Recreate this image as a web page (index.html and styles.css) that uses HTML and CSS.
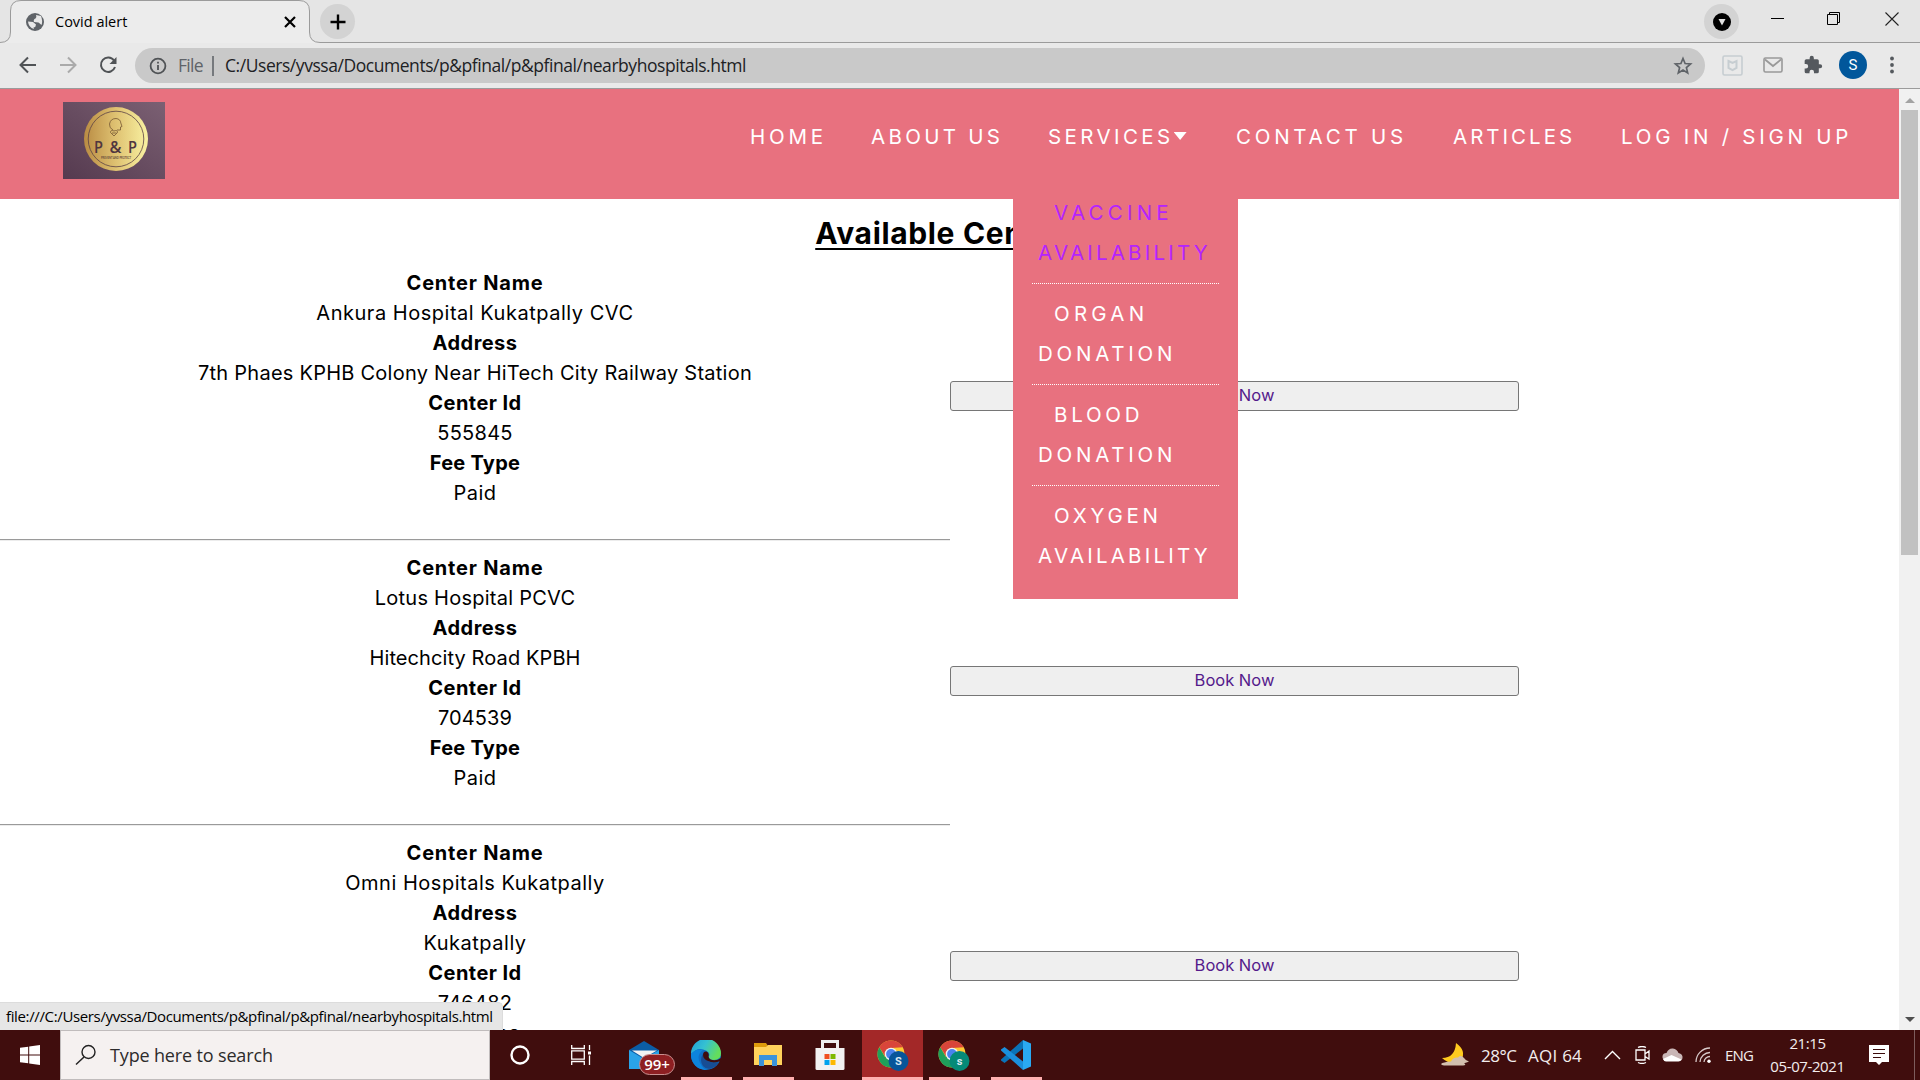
FILE: index.html
```html
<!DOCTYPE html>
<html lang="en">
<head>
<meta charset="utf-8">
<title>Covid alert</title>
<link rel="stylesheet" href="styles.css">
</head>
<body>
<header class="browser">
  <div class="tabstrip">
    <svg class="tab-shape" width="1920" height="43" viewBox="0 0 1920 43">
      <path class="tab-fill" d="M0 43V42.5Q10.5 42.500 10.500 32V11Q10.500 .500 21 .500H299Q309.500 .500 309.500 11V32Q309.500 42.500 320 42.500V43Z"/>
      <path class="tab-line" d="M0 42.500Q10.500 42.500 10.500 32V11Q10.500 .500 21 .500H299Q309.500 .500 309.500 11V32Q309.500 42.500 320 42.500H1920"/>
    </svg>
    <div class="tab">
      <svg width="18" height="18" viewBox="0 0 18 18"><circle cx="9" cy="9" r="9" fill="#5f6368"/><path d="M10 2L15 3Q17 8 15.500 12L12.500 9.500L8 9Q7 6.500 9.500 5.500Q11 4 10 2ZM2 8.500L7 9L10 11.500Q10 14 7.500 14.500L8 16Q2.500 14.500 2 8.500Z" fill="#e8e8e8"/></svg>
      <span class="tab-title">Covid alert</span>
      <svg width="12" height="12" viewBox="0 0 12 12"><path d="M1 1L11 11M11 1L1 11" stroke="#000" stroke-width="2.200"/></svg>
    </div>
    <div class="round newtab"><svg width="16" height="16" viewBox="0 0 16 16"><path d="M8 .500V15.500M.500 8H15.500" stroke="#000" stroke-width="2.400"/></svg></div>
    <div class="window-buttons">
      <div class="round"><svg width="18" height="18" viewBox="0 0 18 18"><circle cx="9" cy="9" r="9"/><path d="M5.500 6H12.500L9 12.500Z" fill="#e0e0e0"/></svg></div>
      <svg width="13" height="13" viewBox="0 0 13 13"><path d="M0 6.500H13" stroke="#000"/></svg>
      <svg width="14" height="14" viewBox="0 0 14 14"><path d="M.500 2.500H10.500V12.500H.500ZM2.500 2V.500H12.500V10.500H11" fill="none" stroke="#000"/></svg>
      <svg width="14" height="14" viewBox="0 0 14 14"><path d="M.500 .500L13.500 13.500M13.500 .500L.500 13.500" stroke="#222" stroke-width="1.100"/></svg>
    </div>
  </div>
  <div class="toolbar">
    <svg class="nav-icon" width="18" height="18" viewBox="0 0 18 18"><path d="M17 9H2M9 1.500L1.500 9L9 16.500" fill="none" stroke="#505356" stroke-width="2"/></svg>
    <svg class="nav-icon" width="18" height="18" viewBox="0 0 18 18"><path d="M1 9H16M9 1.500L16.500 9L9 16.500" fill="none" stroke="#aaa" stroke-width="2"/></svg>
    <svg class="nav-icon" width="18" height="18" viewBox="0 0 18 18"><path d="M15 4.500A7.200 7.200 0 1 0 16 11" fill="none" stroke="#505356" stroke-width="2"/><path d="M17.500 1V8H10.500Z" fill="#505356"/></svg>
    <div class="omnibox">
      <svg width="18" height="18" viewBox="0 0 18 18"><circle cx="9" cy="9" r="7.400" fill="none" stroke="#505356" stroke-width="1.800"/><path d="M9 8V13M9 4.800V6.600" stroke="#505356" stroke-width="1.800"/></svg>
      <span class="scheme">File</span><i class="divider"></i>
      <span class="url">C:/Users/yvssa/Documents/p&amp;pfinal/p&amp;pfinal/nearbyhospitals.html</span>
      <svg class="star" width="20" height="20" viewBox="0 0 20 20"><path d="M10 2.500L12.100 7.500L17.600 8L13.400 11.600L14.700 17L10 14.100L5.300 17L6.600 11.600L2.400 8L7.900 7.500Z" fill="none" stroke="#5f6368" stroke-width="1.700"/></svg>
    </div>
    <div class="extensions">
      <svg width="21" height="21" viewBox="0 0 21 21"><rect x="1" y="1" width="19" height="19" rx="1.500" fill="none" stroke="#c6cdd1" stroke-width="1.600"/><path d="M6.500 6L10.500 8L14.500 6V13L10.500 15.200L6.500 13Z" fill="none" stroke="#c6cdd1" stroke-width="2"/></svg>
      <svg width="20" height="16" viewBox="0 0 20 16"><rect x="1" y="1" width="18" height="14" rx="1.500" fill="none" stroke="#999" stroke-width="1.600"/><path d="M2 2.500L10 9L18 2.500" fill="none" stroke="#999" stroke-width="1.800"/></svg>
      <svg width="20" height="20" viewBox="0 0 24 24"><path fill="#55595e" d="M20.500 11H19V7a2 2 0 0 0-2-2h-4V3.500a2.500 2.500 0 0 0-5 0V5H4a2 2 0 0 0-2 2v3.800h1.500a2.700 2.700 0 0 1 0 5.400H2V20a2 2 0 0 0 2 2h3.800v-1.500a2.700 2.700 0 0 1 5.400 0V22H17a2 2 0 0 0 2-2v-4h1.500a2.500 2.500 0 0 0 0-5z"/></svg>
      <span class="avatar">S</span>
      <svg class="dots" width="4" height="18" viewBox="0 0 4 18"><circle cx="2" cy="2.500" r="1.900" fill="#55595e"/><circle cx="2" cy="9" r="1.900" fill="#55595e"/><circle cx="2" cy="15.500" r="1.900" fill="#55595e"/></svg>
    </div>
  </div>
</header>

<div class="viewport">
  <div class="page">
    <nav class="site-nav">
      <svg class="logo" width="102" height="77" viewBox="0 0 102 77">
        <defs>
          <linearGradient id="bg" x1="0" y1="1" x2="1" y2="0"><stop offset="0" stop-color="#553a4f"/><stop offset="1" stop-color="#7b6073"/></linearGradient>
          <linearGradient id="gold" x1="0" x2="1"><stop offset="0" stop-color="#b98b43"/><stop offset=".5" stop-color="#dfc272"/><stop offset="1" stop-color="#f9f2a2"/></linearGradient>
        </defs>
        <rect width="102" height="77" fill="url(#bg)"/>
        <circle cx="53" cy="37" r="32" fill="url(#gold)"/>
        <circle cx="53" cy="37" r="27.800" fill="none" stroke="#5b4145" stroke-width=".8"/>
        <path d="M50 28Q46 26 46.500 22Q47.500 16.500 53 16.500Q57.500 17 57.800 21L59 24.500L57.500 25V28H54M51 34L47.500 30.500Q47.500 27.500 51 29Q54.500 27.500 54.500 30.500ZM49 31H53.500" fill="none" stroke="#755733" stroke-width=".8"/>
        <g class="logo-name"><text x="31" y="50.500" textLength="9" lengthAdjust="spacingAndGlyphs">P</text><text x="46.500" y="50.500" textLength="12" lengthAdjust="spacingAndGlyphs">&amp;</text><text x="65" y="50.500" textLength="9" lengthAdjust="spacingAndGlyphs">P</text></g>
        <text class="logo-tag" x="38" y="56.500" textLength="30" lengthAdjust="spacingAndGlyphs">PREVENT AND PROTECT</text>
      </svg>
      <ul class="menu">
        <li class="m-home"><a>HOME</a></li>
        <li class="m-about"><a>ABOUT US</a></li>
        <li class="m-services"><a>SERVICES</a><i class="caret"></i>
          <ul class="dropdown">
            <li class="active"><a><b class="first roomy">VACCINE</b><br><b class="tight">AVAILABILITY</b></a></li>
            <li><a><b class="first roomy">ORGAN</b><br><b>DONATION</b></a></li>
            <li><a><b class="first">BLOOD</b><br><b>DONATION</b></a></li>
            <li><a><b class="first">OXYGEN</b><br><b class="tight">AVAILABILITY</b></a></li>
          </ul>
        </li>
        <li class="m-contact"><a>CONTACT US</a></li>
        <li class="m-articles"><a>ARTICLES</a></li>
        <li class="m-login"><a>LOG IN / SIGN UP</a></li>
      </ul>
    </nav>
    <h2 class="title">Available Centers</h2>
    <section class="center">
      <div class="details">
        <strong class="name">Center Name</strong><p class="wide">Ankura Hospital Kukatpally CVC</p>
        <strong>Address</strong><p>7th Phaes KPHB Colony Near HiTech City Railway Station</p>
        <strong>Center Id</strong><p>555845</p>
        <strong class="fee">Fee Type</strong><p class="wide">Paid</p>
      </div>
      <button class="book">Book Now</button>
    </section>
    <section class="center">
      <div class="details">
        <strong class="name">Center Name</strong><p>Lotus Hospital PCVC</p>
        <strong>Address</strong><p class="narrow">Hitechcity Road KPBH</p>
        <strong>Center Id</strong><p class="narrow">704539</p>
        <strong class="fee">Fee Type</strong><p class="wide">Paid</p>
      </div>
      <button class="book">Book Now</button>
    </section>
    <section class="center">
      <div class="details">
        <strong class="name">Center Name</strong><p class="wide">Omni Hospitals Kukatpally</p>
        <strong>Address</strong><p class="wide">Kukatpally</p>
        <strong>Center Id</strong><p>746482</p>
        <strong class="fee">Fee Type</strong><p class="wide">Paid</p>
      </div>
      <button class="book">Book Now</button>
    </section>
  </div>
  <div class="scrollbar">
    <svg width="10" height="5" viewBox="0 0 10 5"><path d="M0 5L5 0L10 5Z" fill="#a3a3a3"/></svg>
    <div class="thumb"></div>
    <svg width="10" height="5" viewBox="0 0 10 5"><path d="M0 0L5 5L10 0Z" fill="#505050"/></svg>
  </div>
  <div class="status">file:///C:/Users/yvssa/Documents/p&amp;pfinal/p&amp;pfinal/nearbyhospitals.html</div>
</div>

<footer class="taskbar">
  <div class="start"><svg width="20" height="20" viewBox="0 0 20 20"><path fill="#fff" d="M0 2.800L8.200 1.700V9.500H0ZM9.200 1.500L20 0V9.500H9.200ZM0 10.500H8.200V18.300L0 17.200ZM9.200 10.500H20V20L9.200 18.500Z"/></svg></div>
  <div class="search">
    <svg width="22" height="22" viewBox="0 0 22 22"><circle cx="13.500" cy="8" r="6.500" fill="none" stroke="#222" stroke-width="1.400"/><path d="M9 13L1 20.500" stroke="#222" stroke-width="1.500"/></svg>
    <span>Type here to search</span>
  </div>
  <div class="apps">
    <div class="app"><svg width="20" height="20" viewBox="0 0 20 20"><circle cx="10" cy="10" r="8.500" fill="none" stroke="#fff" stroke-width="2.400"/></svg></div>
    <div class="app taskview"><svg width="20" height="20" viewBox="0 0 20 20"><path d="M.700 0V3.500H13.300V0M.700 20V16.500H13.300V20M.700 5.800H13.300V14.200H.700ZM18.500 0V5M18.500 10.500V20" fill="none" stroke="#fff" stroke-width="1.300"/><path d="M17 6.500h3v3h-3z" fill="#fff"/></svg></div>
    <div class="app mail"><svg width="30" height="28" viewBox="0 0 30 28"><path d="M0 9L15 0L30 9V20H0Z" fill="#0b5da6"/><path d="M0 9L15 18L30 9V28H0Z" fill="#2aa3e8"/><path d="M3 9.500H28L15 17Z" fill="#f2f2f2"/></svg><span class="count">99+</span></div>
    <div class="app open"><svg width="30" height="30" viewBox="0 0 30 30"><defs><linearGradient id="e1" x1="0" y1="0" x2="1" y2=".4"><stop offset="0" stop-color="#1f9ed8"/><stop offset=".5" stop-color="#35c1d2"/><stop offset="1" stop-color="#64dd5c"/></linearGradient></defs><circle cx="15" cy="15" r="15" fill="#0f6fc6"/><path d="M0 14A15 15 0 0 1 30 13.500Q30 20 23 20Q18 20 17.500 17.500Q20 13 15 10.500Q7 6 0 14Z" fill="url(#e1)"/><path d="M0 14Q5 8 12 10Q5 15 9 23Q12 29 16 30A15 15 0 0 1 0 14Z" fill="#0d84dc"/><path d="M12 14Q8 20 12 26Q15 29.500 20 28.500Q25 27 28 22Q22 24 17 21Q12 19 12 14Z" fill="#174d94"/><path d="M12 15Q12 11 15.500 11.500Q18.500 12.500 17.500 16.500Q18 20 23.500 20.300Q27 20.300 30 18L31 22L28 21.500Q22 23.500 17 21Q12 19 12 15Z" fill="#400d0d"/></svg></div>
    <div class="app open"><svg width="28" height="24" viewBox="0 0 28 24"><path d="M0 0H12L14 3H27V10H0Z" fill="#dd9b0c"/><path d="M0 4H12L14 2H28V22H0Z" fill="#ffd25c"/><path d="M5 23V12H23V23H18V17H10V23Z" fill="#3b93db"/></svg></div>
    <div class="app"><svg width="30" height="30" viewBox="0 0 30 30"><path d="M7.500 9V1.500H22.500V9" fill="none" stroke="#eee" stroke-width="3"/><path d="M.500 8H29.500V28.500Q29.500 30 28 30H2Q.500 30 .500 28.500Z" fill="#f2f2f2"/><path d="M9.500 14h5v5h-5z" fill="#f04e1f"/><path d="M15.500 14h5v5h-5z" fill="#7eb900"/><path d="M9.500 20h5v5h-5z" fill="#00a3ee"/><path d="M15.500 20h5v5h-5z" fill="#fdb900"/></svg></div>
    <div class="app open current"><svg width="32" height="32" viewBox="0 0 32 32"><circle cx="14" cy="15" r="13.500" fill="#fdc934"/><path d="M2.300 8.200A13.500 13.500 0 0 1 25.700 8.200L14 9L8.500 18Z" fill="#d9453a"/><path d="M2.300 8.200A13.500 13.500 0 0 0 14 28.500L19.500 18H8Z" fill="#1fa05a"/><circle cx="14" cy="15" r="6.300" fill="#f3f3f3"/><circle cx="14" cy="15" r="4.900" fill="#4a83ee"/><circle cx="21.500" cy="22" r="10" fill="#07559a"/><text class="badge-letter" x="21.500" y="26">S</text></svg></div>
    <div class="app open"><svg width="32" height="32" viewBox="0 0 32 32"><circle cx="14" cy="15" r="13.500" fill="#fdc934"/><path d="M2.300 8.200A13.500 13.500 0 0 1 25.700 8.200L14 9L8.500 18Z" fill="#d9453a"/><path d="M2.300 8.200A13.500 13.500 0 0 0 14 28.500L19.500 18H8Z" fill="#1fa05a"/><circle cx="14" cy="15" r="6.300" fill="#f3f3f3"/><circle cx="14" cy="15" r="4.900" fill="#4a83ee"/><circle cx="21.500" cy="22" r="10" fill="#058a78"/><text class="badge-letter" x="21.500" y="26">s</text></svg></div>
    <div class="app open"><svg width="30" height="30" viewBox="0 0 30 30"><path d="M22 0L30 3.500V26.500L22 30Z" fill="#2aa9f2"/><path d="M22 0V8.500L3.500 23L0 20.500V19.500Z" fill="#0a73b8"/><path d="M22 30V21.500L3.500 7L0 9.500V10.500Z" fill="#1b8fdc"/></svg></div>
  </div>
  <div class="tray">
    <svg width="28" height="24" viewBox="0 0 28 24"><path d="M15 0Q26 8 20 17Q11 24 1 15Q14 15 15 0Z" fill="#ffcb1f"/><path d="M0 21Q2 19 10 18.500Q12 14 17 14.500Q20 11.500 23 15Q25 18 28 18.500Q24 20 23 20Q26 22 22 22.500H5Q1 22.500 0 21Z" fill="#d3bfae"/></svg>
    <span class="temp">28°C</span><span class="aqi">AQI 64</span>
    <svg class="chev" width="17" height="10" viewBox="0 0 17 10"><path d="M1 9L8.500 1.500L16 9" fill="none" stroke="#fff" stroke-width="1.400"/></svg>
    <svg class="meet" width="15" height="18" viewBox="0 0 15 18"><path d="M1 4H10V14H1ZM10 8L14 5V13L10 10.500M3 1.500Q7 -.500 11 1.500M3 16.500Q7 18.500 11 16.500" fill="none" stroke="#fff" stroke-width="1.300"/></svg>
    <svg class="cloud" width="21" height="14" viewBox="0 0 21 14"><path d="M4 13Q0 12 .500 8Q1 5 4.500 5Q6.500 0 11 .500Q15 1 16.500 5Q21 6 20.500 10Q20 13 17 13Z" fill="#c9b6b6"/><path d="M1 11L9.500 7L19.500 11.500Q18.500 13.500 16.500 13.500H4Q2 13.500 1 11Z" fill="#fff"/></svg>
    <svg class="wifi" width="16" height="16" viewBox="0 0 16 16"><path d="M1 15A14 14 0 0 1 15 1M5 15A10 10 0 0 1 15 5.500M9 15A6 6 0 0 1 15 9.500" fill="none" stroke="#d8caca" stroke-width="1.300"/><circle cx="14" cy="14.300" r="1.700" fill="#fff"/></svg>
    <span class="lang">ENG</span>
    <div class="clock"><span>21:15</span><span>05-07-2021</span></div>
    <svg class="notes" width="20" height="20" viewBox="0 0 20 20"><path d="M0 0H20V17H13L10 20L7 17H0Z" fill="#fff"/><path d="M4 4.500H16M4 8.500H16M4 12.500H12" stroke="#3c0c0c" stroke-width="1.200"/></svg>
    <i class="peek"></i>
  </div>
</footer>
</body>
</html>
```
FILE: styles.css
```css
* { box-sizing: border-box; }
body { margin: 0; width: 1920px; height: 1080px; overflow: hidden; display: flex; flex-direction: column; font-family: "Open Sans", "Noto Sans", sans-serif; color: #000; }
svg { display: block; flex: none; }
ul { list-style: none; margin: 0; padding: 0; }
p { margin: 0; }

/* browser chrome */
.browser { height: 89px; background: #e9e9e9; border-bottom: 1px solid #9b9b9b; flex: none; }
.tabstrip { position: relative; height: 43px; background: #e5e5e5; display: flex; align-items: center; }
.tab-shape { position: absolute; left: 0; top: 0; }
.tab-fill { fill: #ececec; }
.tab-line { fill: none; stroke: #9b9b9b; }
.tab { position: relative; display: flex; align-items: center; width: 296px; margin-left: 26px; padding-right: 26px; }
.tab-title { flex: 1; margin: -1px 0 0 11px; font-size: 14.500px; }
.round { position: relative; width: 35px; height: 35px; border-radius: 50%; background: #d3d3d3; display: flex; align-items: center; justify-content: center; }
.newtab { margin-left: -2px; }
.window-buttons { position: relative; display: flex; align-items: center; margin-left: auto; padding-right: 21px; }
.window-buttons > svg { margin-bottom: 6px; }
.window-buttons > svg:nth-child(2) { margin-left: 32px; }
.window-buttons > svg:nth-child(3) { margin-left: 43px; }
.window-buttons > svg:nth-child(4) { margin-left: 44px; }
.toolbar { display: flex; align-items: center; height: 45px; padding-left: 19px; }
.nav-icon { margin-right: 22px; margin-top: -2px; }
.omnibox { display: flex; align-items: center; width: 1570px; height: 35px; margin-left: -4px; padding: 0 12px 0 14px; border-radius: 18px; background: #c9c9c9; font-size: 17.500px; letter-spacing: -.45px; color: #202124; }
.scheme { margin: -1px 0 0 11px; width: 34px; color: #5f6368; letter-spacing: -.7px; }
.divider { width: 2px; height: 20px; background: #76797d; margin-right: 11px; }
.url { margin-top: -1px; }
.star { margin-left: auto; }
.extensions { display: flex; align-items: center; gap: 20px; margin: -1px 0 0 17px; }
.avatar { width: 28px; height: 28px; margin-left: -4px; border-radius: 50%; background: #01579b; color: #fff; font: 15px/28px Roboto, sans-serif; text-align: center; }
.dots { margin-left: 3px; }

/* page area */
.viewport { position: relative; display: flex; height: 941px; flex: none; background: #fff; }
.page { width: 1899px; height: 941px; overflow: hidden; font-family: Inter, "Open Sans", sans-serif; }
.site-nav { display: flex; justify-content: space-between; height: 110px; padding: 13px 51px 0 63px; background: #e8717f; }
.logo-name { font: 600 16.500px "Open Sans", sans-serif; fill: #50363f; }
.logo-tag { font: 700 3px Lato, sans-serif; fill: #6b4d3d; }
.menu { display: flex; color: #fff; font-size: 20.500px; line-height: 40px; letter-spacing: 3.750px; padding-top: 15px; }
.menu > li { position: relative; display: flex; height: 40px; white-space: nowrap; }
.m-home { width: 121px; }
.m-about { width: 177px; letter-spacing: 3.300px; }
.m-services { width: 188px; letter-spacing: 3.400px; }
.m-contact { width: 217px; }
.m-articles { width: 168px; letter-spacing: 3px; }
.m-login { width: 227px; }
.caret { width: 13px; height: 8px; margin: 15px 0 0 0; background: #fff; clip-path: polygon(0 0, 100% 0, 50% 100%); }
.dropdown { position: absolute; left: -35px; top: 66px; width: 225px; height: 416px; padding: 0 19px; background: #e8717f; letter-spacing: 3.750px; z-index: 2; }
.dropdown li { height: 101px; padding: 10px 0 10px 6px; border-bottom: 1px dotted #fff; }
.dropdown li:last-child { border: 0; }
.dropdown b { font-weight: 400; }
.dropdown .first { margin-left: 16px; }
.dropdown .roomy { letter-spacing: 4.200px; }
.dropdown .tight { letter-spacing: 3.200px; }
.active { color: #b423ff; }
.title { margin: 0; padding-top: 12px; height: 57px; text-align: center; font-size: 30px; line-height: 45px; letter-spacing: .65px; text-decoration: underline; text-decoration-thickness: 2px; text-underline-offset: 4px; }
.center { display: flex; align-items: flex-start; height: 285px; }
.details { width: 950px; height: 285px; padding-top: 12px; border-bottom: 1px solid #ececec; box-shadow: inset 0 -1px #9a9a9a; text-align: center; font-size: 20px; line-height: 30px; letter-spacing: .25px; }
.details strong { display: block; letter-spacing: .45px; }
.details .name { letter-spacing: .8px; }
.details .fee { letter-spacing: .25px; }
.details .wide { letter-spacing: .52px; }
.details .narrow { letter-spacing: .1px; }
.book { width: 569px; height: 30px; margin: 125px 0 0; padding: 0 0 2px; border: 1px solid #767676; border-radius: 3px; background: #efefef; color: #551a8b; font: 16.500px/24px Inter, sans-serif; }
.scrollbar { display: flex; flex-direction: column; align-items: center; width: 21px; padding: 9px 0 8px; background: #f1f1f1; }
.thumb { width: 17px; height: 445px; margin: 7px 0 auto; background: #c1c1c1; }
.status { position: absolute; left: 0; bottom: 0; height: 28px; width: 503px; padding-left: 6px; border: 1px solid #dcdcdc; border-width: 1px 1px 0 0; border-radius: 0 5px 0 0; background: #e6e6e6; font-size: 15px; line-height: 27px; letter-spacing: -.36px; white-space: nowrap; }

/* taskbar */
.taskbar { display: flex; height: 50px; background: #400d0d; color: #f3eded; }
.start { width: 60px; display: flex; align-items: center; justify-content: center; }
.search { display: flex; align-items: center; gap: 13px; width: 430px; padding-left: 14px; border: 1px solid #c0bcbc; background: #f5f1f0; color: #2d2b2b; font-size: 18px; letter-spacing: -.15px; }
.apps { display: flex; }
.app { position: relative; width: 62px; display: flex; align-items: center; justify-content: center; padding-right: 2px; }
.taskview { padding-right: 5px; }
.open::after { content: ""; position: absolute; left: 5px; right: 6px; bottom: 0; height: 3px; background: #ffb0b0; }
.current { background: #a32828; width: 61px; margin-right: 1px; padding: 0 0 0 1px; }
.open.current::after { left: 0; right: 0; }
.count { position: absolute; left: 25px; top: 24px; width: 36px; height: 21px; border: 1px solid #c98f8f; border-radius: 11px; background: #8e1f22; color: #fff; font-size: 15px; font-weight: 600; line-height: 19px; text-align: center; }
.badge-letter { font: 700 11px Roboto, sans-serif; fill: #d8e6f0; text-anchor: middle; }
.tray { display: flex; align-items: center; margin-left: auto; font-size: 17px; white-space: nowrap; }
.temp { width: 36px; margin-left: 12px; letter-spacing: -.5px; }
.aqi { width: 54px; margin-left: 11px; letter-spacing: .25px; }
.chev { margin-left: 22px; }
.meet { margin-left: 14px; }
.cloud { margin-left: 12px; }
.wifi { margin-left: 12px; }
.lang { width: 29px; margin-left: 14px; font-size: 15px; letter-spacing: -.8px; }
.clock { display: flex; flex-direction: column; align-items: center; width: 75px; margin-left: 16px; font-size: 15px; line-height: 23px; letter-spacing: -.4px; }
.notes { margin-left: 24px; }
.peek { width: 1px; height: 50px; margin: 0 5px 0 25px; background: #7d5c5c; }
```
